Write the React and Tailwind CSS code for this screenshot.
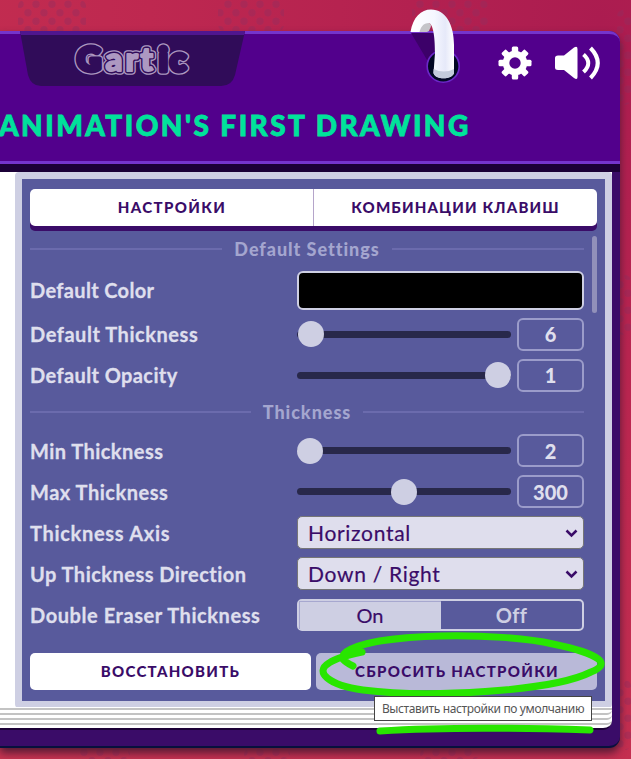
import React from "react";

const lato = "font-['Lato','Noto_Sans',sans-serif]";

function Backdrop() {
  const patches = [
    [18, 0, 68, 31], [218, 0, 66, 31], [412, 0, 76, 31], [617, 10, 14, 95],
    [617, 275, 14, 60], [76, 749, 54, 10], [244, 749, 46, 10], [420, 749, 60, 10], [617, 680, 14, 70],
  ];
  return (
    <svg className="absolute inset-0" width="631" height="759">
      <defs>
        <pattern id="dots" width="16" height="17" patternUnits="userSpaceOnUse">
          <circle cx="4" cy="4.200" r="3.700" fill="#902c5e" fillOpacity=".4" />
          <circle cx="12" cy="12.700" r="3.700" fill="#902c5e" fillOpacity=".4" />
        </pattern>
      </defs>
      {patches.map(([x, y, w, h], i) => (
        <rect key={i} x={x} y={y} width={w} height={h} rx="6" fill="url(#dots)" />
      ))}
    </svg>
  );
}

function Logo() {
  const text = { fontFamily: "Lato, sans-serif", fontWeight: 900, fontSize: 33 };
  const letters = [
    ["G", 13, 38, 0], ["c", 106, 38, 0], ["a", 41.5, 38, 1], ["r", 61.5, 38, 1], ["t", 76.5, 38, 1], ["i", 95, 38, 0],
  ];
  return (
    <svg width="225" height="56" viewBox="0 0 225 56" className="absolute left-5 -top-[3px]">
      <path d="M0 0H225L215 44Q212 55 201 55H21Q11 55 8 44Z" fill="#300c59" />
      <path d="M0 0H225L224 4H1Z" fill="#4f168f" />
      <g style={text} transform="translate(44 2)" strokeLinejoin="round">
        {letters.map(([c, x, y]) => <text key={c} x={x} y={y} fill="#ad98c1" stroke="#ad98c1" strokeWidth="7.500">{c}</text>)}
        {letters.map(([c, x, y]) => <text key={c} x={x} y={y} fill="#300c59" stroke="#300c59" strokeWidth="4.800">{c}</text>)}
        {letters.filter((l) => l[3]).map(([c, x, y]) => <text key={c} x={x} y={y} fill="#ad98c1" stroke="#ad98c1" strokeWidth="2">{c}</text>)}
      </g>
    </svg>
  );
}

function Ring() {
  return (
    <svg className="absolute left-[405px] top-0" width="65" height="90" viewBox="0 0 65 90">
      <defs>
        <linearGradient id="ring" x1="0" x2="1">
          <stop offset="0" stopColor="#fff" /><stop offset=".55" stopColor="#f5f7ff" /><stop offset=".8" stopColor="#e6e9f9" /><stop offset="1" stopColor="#fff" />
        </linearGradient>
      </defs>
      <path d="M6 33H30V53L25 65Z" fill="#3c0169" />
      <circle cx="38.2" cy="66.2" r="16" fill="#020824" stroke="#6b28c8" strokeWidth="1.6" />
      <path d="M14 32C15 25 19 22 24 23C28 25 25 28 24 31L22 32Z" fill="#c5c5c9" />
      <path d="M5.500 32C8 17 16 9.500 26 9.500C41 9.500 49 25 49 45L49 73C47 80 30 80 28.500 73L30 53C30 41 29 25 24 23C18 23 16 27 14.500 32Z" fill="url(#ring)" />
      <path d="M28.600 69Q39 74 49 69V73C47 80 30 80 28.500 73Z" fill="#c3cbdc" />
    </svg>
  );
}

function Gear() {
  return (
    <svg width="34" height="34" viewBox="-17 -17 34 34" fill="#fff">
      {[0, 45, 90, 135].map((a) => (
        <rect key={a} x="-3.200" y="-16.500" width="6.400" height="33" rx="1.500" transform={`rotate(${a})`} />
      ))}
      <circle r="12.200" />
      <circle r="5.700" fill="#52008c" />
    </svg>
  );
}

function Speaker() {
  return (
    <svg width="47" height="34" viewBox="0 0 47 34">
      <path d="M1 12Q1 9.500 4 9.500H10L20 1.500Q23.500-.5 23.500 3V31Q23.500 34.500 20 32L10 24H4Q1 24 1 21.500Z" fill="#fff" />
      <path d="M29.500 8.500Q39 17 29.500 26M36.500 2Q51 17 36.500 32" fill="none" stroke="#fff" strokeWidth="4" />
    </svg>
  );
}

function Section({ children }) {
  return (
    <div className="flex h-[36px] w-[554px] shrink-0 items-center gap-[12px] text-[18px] font-black text-[#a4a6cf]">
      <span className="h-[2px] flex-1 bg-[#6b6bad]" />
      <span className="leading-none tracking-[0.95px]">{children}</span>
      <span className="h-[2px] flex-1 bg-[#6b6bad]" />
    </div>
  );
}

function Row({ label, spacing, children, height = "h-[33px]" }) {
  return (
    <div className={`flex w-[554px] shrink-0 items-center ${height}`}>
      <span className={`w-[267px] whitespace-nowrap text-[20px] leading-none font-bold text-[#dfdfed] [-webkit-text-stroke:0.3px] ${spacing}`}>{label}</span>
      {children}
    </div>
  );
}

function Slider({ value, offset }) {
  return (
    <>
      <div className="flex h-[7px] w-[214px] items-center rounded-full bg-[#28284a]">
        <span className="size-[26px] shrink-0 rounded-full bg-[#cecfe3]" style={{ marginLeft: offset }} />
      </div>
      <div className="ml-[6px] flex h-[33px] w-[67px] items-center justify-center rounded-[6px] border-2 border-[#9b9cca] text-[20px] font-black leading-none text-[#dfdfed]">
        {value}
      </div>
    </>
  );
}

function Select({ value }) {
  return (
    <div className="flex h-[33px] w-[287px] items-center justify-between rounded-[5px] border border-[#767676] bg-[#dfdeed] pr-[5px] pl-[10px] text-[21px] leading-none text-[#3a0c68]">
      <span className="tracking-[0.7px] [-webkit-text-stroke:0.2px]">{value}</span>
      <svg width="13" height="10" viewBox="0 0 13 10"><path d="M1.500 2.500L6.500 7.500L11.500 2.500" fill="none" stroke="#3a0c68" strokeWidth="2.500" /></svg>
    </div>
  );
}

function Panel() {
  return (
    <div className="flex h-[536px] w-[597px] flex-col rounded-[4px] border-[7.5px] border-[#cecfe3] bg-[#585a9c] pt-[10px] pl-2">
      <div className="flex h-[37px] w-[567px] shrink-0 rounded-[5px] bg-white text-[15px] font-black text-[#3a0c68] shadow-[0_5px_0_#3a0c68]">
        <div className="flex w-[284px] items-center justify-center border-r border-[#b5a5ca] pl-[1px] tracking-[1.4px]">НАСТРОЙКИ</div>
        <div className="flex flex-1 items-center justify-center tracking-[1.15px]">КОМБИНАЦИИ КЛАВИШ</div>
      </div>
      <div className="mt-[5px] flex h-[402px] shrink-0">
        <div className="flex w-[554px] flex-col">
          <Section>Default Settings</Section>
          <div className="mt-1 flex shrink-0 flex-col gap-2">
            <Row label="Default Color" height="h-[39px]" spacing="tracking-[0.35px]">
              <div className="h-[39px] w-[287px] rounded-[6px] border-[2.5px] border-[#cecfe3] bg-black" />
            </Row>
            <Row label="Default Thickness" spacing="tracking-[0.55px]"><Slider value="6" offset={1} /></Row>
            <Row label="Default Opacity" spacing="tracking-[0.4px]"><Slider value="1" offset={188} /></Row>
          </div>
          <div className="mt-[2px] shrink-0"><Section>Thickness</Section></div>
          <div className="mt-[4px] flex shrink-0 flex-col gap-2 pt-[0.5px]">
            <Row label="Min Thickness" spacing="tracking-[0.46px]"><Slider value="2" offset={0} /></Row>
            <Row label="Max Thickness" spacing="tracking-[0.52px]"><Slider value="300" offset={94} /></Row>
            <Row label="Thickness Axis" spacing="tracking-[0.7px]"><Select value="Horizontal" /></Row>
            <Row label="Up Thickness Direction" spacing="tracking-[0.48px]"><Select value="Down / Right" /></Row>
            <Row label="Double Eraser Thickness" spacing="tracking-[0.57px]">
              <div className="flex h-8 w-[287px] rounded-[5px] border-2 border-[#cecfe3] text-[20px] leading-none">
                <span className="flex w-[142px] items-center justify-center bg-[#cecfe3] text-[#3a0c68] shadow-[inset_1px_1px_0_#a7a8cf] [-webkit-text-stroke:0.2px]">On</span>
                <span className="flex flex-1 items-center justify-center font-bold tracking-[0.4px] text-[#cecfe3]">Off</span>
              </div>
            </Row>
          </div>
        </div>
        <span className="mt-[5px] ml-[8px] h-[77px] w-[5px] rounded-full bg-[#9190ba]" />
      </div>
      <div className="mt-[20px] flex w-[567px] gap-[5px] text-[15px] font-black text-[#3a0c68]">
        <div className="flex h-[37px] w-[281px] items-center justify-center rounded-[5px] bg-white tracking-[1.3px]">ВОССТАНОВИТЬ</div>
        <div className="flex h-[37px] flex-1 items-center justify-center rounded-[5px] bg-[#b9b9d8] pl-[1px] tracking-[1.3px]">СБРОСИТЬ НАСТРОЙКИ</div>
      </div>
    </div>
  );
}

export default function App() {
  return (
    <div className={`relative h-[759px] w-[631px] overflow-hidden bg-[radial-gradient(circle_at_600px_20px,#ab1c50,#be2850_450px,#c93450)] ${lato}`}>
      <Backdrop />
      <div className="relative mt-[31px] flex h-[717px] w-[620px] flex-col rounded-r-[11px] border-b-2 border-[#07113d] bg-[#3a0c68] shadow-[0_5px_9px_#551b35]">
        <header className="relative flex h-[133px] shrink-0 flex-col rounded-tr-[11px] border-y-[3px] border-[#7434cc] bg-[#52008c]">
          <Logo />
          <div className="flex h-[58px] items-center justify-end gap-[22px] pr-[19px]"><Gear /><Speaker /></div>
          <h1 className="-ml-[1px] mt-[15px] whitespace-nowrap text-[28px] leading-[36px] font-black tracking-[2.45px] text-[#00e29b] [-webkit-text-stroke:0.8px]">ANIMATION'S FIRST DRAWING</h1>
        </header>
        <div className="h-[7.5px] shrink-0 bg-[#1b0036]" />
        <main className="flex h-[535.5px] w-[612px] shrink-0 bg-white pl-[15px]"><Panel /></main>
        <div className="flex h-[23px] w-[612px] shrink-0 flex-col overflow-hidden rounded-br-[9px] border-b-2 border-[#1b0036] bg-white">
          <span className="h-[3px] shrink-0 border-b-2 border-[#c3c3c3]" />
          {[0, 1, 2].map((n) => <span key={n} className="h-[5px] shrink-0 rounded-br-[5px] border-b-2 border-[#c3c3c3]" />)}
        </div>
      </div>
      <Ring />
      <svg className="absolute inset-0" width="631" height="759" fill="none" stroke="#28e600" strokeWidth="7" strokeLinecap="round" strokeLinejoin="round">
        <path d="M353 666C345 662 338 658 346 652C375 632 500 632 553 644C601 654 612 664 591 672C551 692 425 698 363 690C328 685 314 672 329 663C336 658 347 655 362 652" />
        <path d="M380 731Q460 726 590 730" />
      </svg>
      <div className="absolute top-[696px] left-[374px] flex h-[25px] w-[218px] items-center justify-center border border-[#444] bg-white font-['Noto_Sans',sans-serif] text-[12px] tracking-[-0.37px] whitespace-nowrap text-[#555]">
        Выставить настройки по умолчанию
      </div>
    </div>
  );
}
